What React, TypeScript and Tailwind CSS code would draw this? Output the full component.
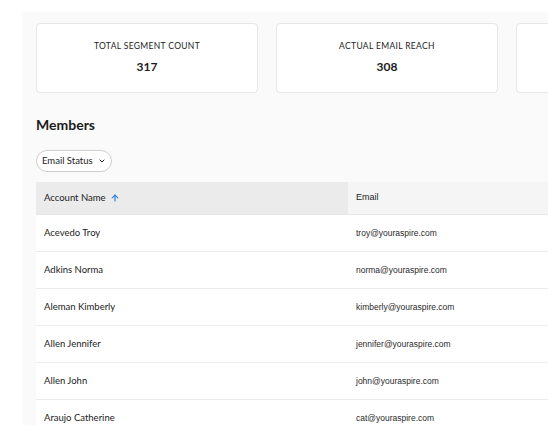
import React from 'react';
import { ArrowUp, ChevronDown } from 'lucide-react';

const stats = [
  { label: 'TOTAL SEGMENT COUNT', value: '317' },
  { label: 'ACTUAL EMAIL REACH', value: '308' },
  { label: '', value: '' },
];

const members = [
  { name: 'Acevedo Troy', email: 'troy@youraspire.com' },
  { name: 'Adkins Norma', email: 'norma@youraspire.com' },
  { name: 'Aleman Kimberly', email: 'kimberly@youraspire.com' },
  { name: 'Allen Jennifer', email: 'jennifer@youraspire.com' },
  { name: 'Allen John', email: 'john@youraspire.com' },
  { name: 'Araujo Catherine', email: 'cat@youraspire.com' },
];

const nameFont = "font-['Lato','Noto_Sans',sans-serif]";

export default function App() {
  return (
    <div className="w-[548px] h-[443px] bg-white pt-[12px] pl-[22px] overflow-hidden">
      <div className={`h-[413px] bg-[#fafafa] pl-[14px] pt-[11px] overflow-hidden text-[#1c1c1c] ${nameFont}`}>
        {/* Stat cards */}
        <div className="flex gap-[18px]">
          {stats.map((s, i) => (
            <div
              key={i}
              className="w-[222px] h-[70px] shrink-0 bg-white border border-[#e6e6e6] rounded-[4px] flex flex-col items-center pt-[16px]"
            >
              {s.label && (
                <>
                  <span className="text-[8.5px] leading-[12px] tracking-[0.04em]">{s.label}</span>
                  <span className="mt-[8px] text-[12px] leading-[14px] font-bold">{s.value}</span>
                </>
              )}
            </div>
          ))}
        </div>

        {/* Members */}
        <h2 className="mt-[23px] text-[14px] leading-[18px] font-bold">Members</h2>

        <button className="mt-[16px] h-[22px] flex items-center gap-[5px] px-[5px] rounded-full border border-[#cfcfcf] bg-white text-[9.5px]">
          <span>Email Status</span>
          <ChevronDown size={8} strokeWidth={3} />
        </button>

        {/* Table */}
        <div className="mt-[10px] w-[600px]">
          <div className="flex h-[33px] border-b border-[#e6e6e6]">
            <div className="w-[312px] bg-[#ebebeb] flex items-center pl-[8px] gap-[4px] text-[9.5px]">
              <span>Account Name</span>
              <ArrowUp size={10} strokeWidth={2.5} className="text-[#1a6fe0]" />
            </div>
            <div className="flex-1 bg-[#f5f5f5] flex items-center pl-[8px] text-[9px] font-['Liberation_Sans',sans-serif]">
              Email
            </div>
          </div>
          {members.map(m => (
            <div key={m.email} className="flex h-[37px] bg-white border-b border-[#ececec]">
              <div className="w-[312px] flex items-center pl-[8px] text-[9.5px]">{m.name}</div>
              <div className="flex-1 flex items-center pl-[8px] text-[8.5px] text-[#2a2a2a] font-['Liberation_Sans',sans-serif]">
                {m.email}
              </div>
            </div>
          ))}
        </div>
      </div>
    </div>
  );
}
